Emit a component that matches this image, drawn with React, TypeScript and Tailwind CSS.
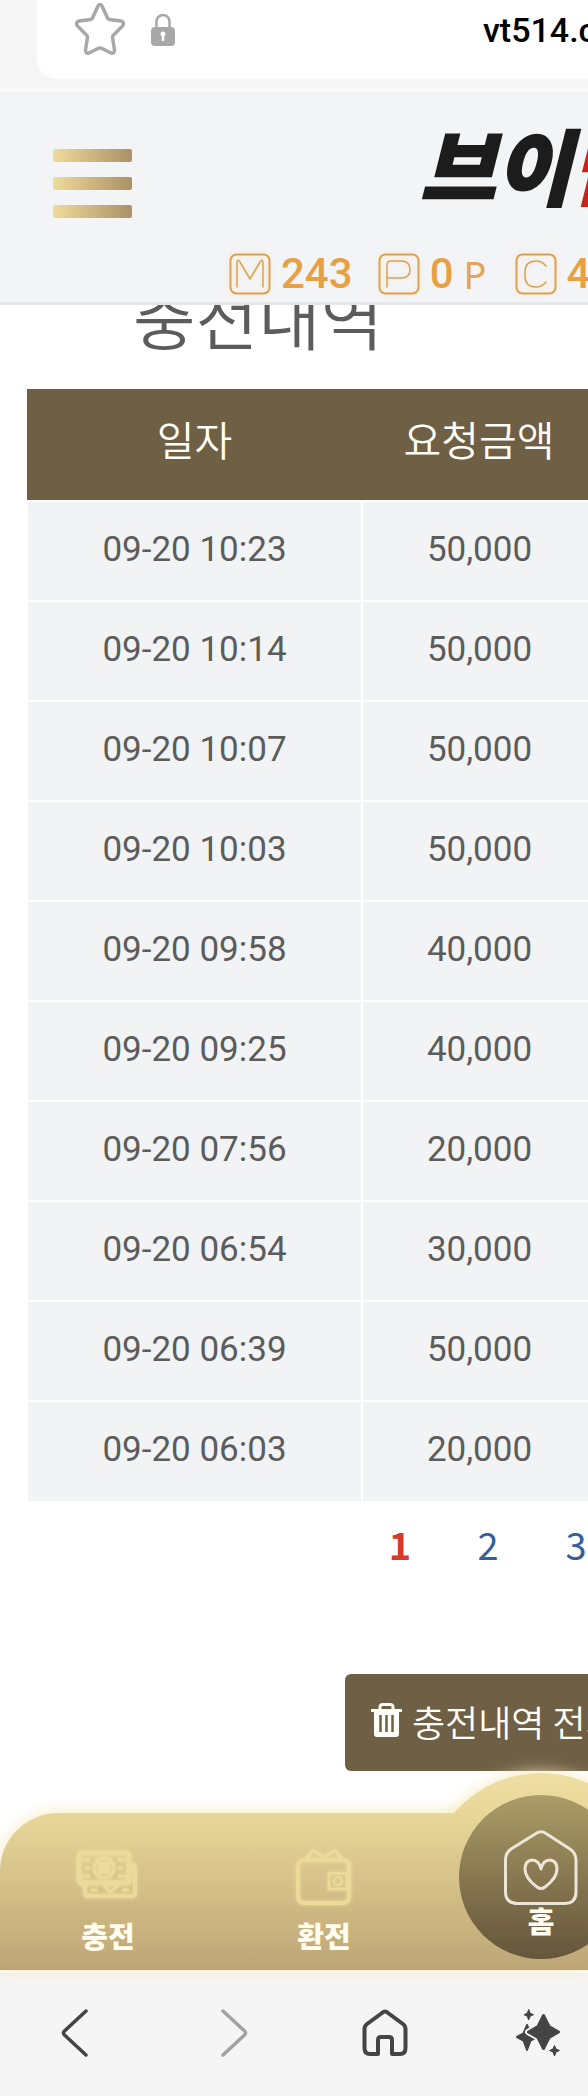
import React from "react";

const deposits = [
  { date: "09-20 10:23", amount: "50,000" },
  { date: "09-20 10:14", amount: "50,000" },
  { date: "09-20 10:07", amount: "50,000" },
  { date: "09-20 10:03", amount: "50,000" },
  { date: "09-20 09:58", amount: "40,000" },
  { date: "09-20 09:25", amount: "40,000" },
  { date: "09-20 07:56", amount: "20,000" },
  { date: "09-20 06:54", amount: "30,000" },
  { date: "09-20 06:39", amount: "50,000" },
  { date: "09-20 06:03", amount: "20,000" },
];

function BrowserTop() {
  return (
    <div className="bg-[#f6f6f6] border-b-3 border-[#fbfbfb] pl-[37px] pb-[10px]">
      <div className="h-[79px] bg-white rounded-bl-[20px] flex items-center pl-[38px] pb-[20px]">
        <button aria-label="즐겨찾기" className="shrink-0">
          <svg width="50" height="55" viewBox="0 0 50 55" fill="none" stroke="#a8a8aa" strokeWidth="3.5" strokeLinejoin="round">
            <path d="M23 4Q25 1 27 4L32.500 16Q33 17 34.500 17.500L46 19Q50 20.500 47.500 24L38.500 33Q37.500 34 37.500 35.500L39.500 48Q39.500 52 36 51L27 46.500Q25 45.500 23 46.500L14 51Q10.500 52 10.500 48L12.500 35.500Q12.500 34 11.500 33L2.500 24Q0 20.500 4 19L15.500 17.500Q17 17 17.500 16Z" />
          </svg>
        </button>
        <svg className="ml-[26px] shrink-0" width="24" height="34" viewBox="0 0 24 34">
          <path d="M5.500 14V8.500a6.500 6.500 0 0 1 13 0V14" fill="none" stroke="#a8a8aa" strokeWidth="2.500" />
          <rect y="14" width="24" height="19" rx="4" fill="#a8a8aa" />
          <circle cx="12" cy="21" r="2.500" fill="#fff" />
          <path d="M12 21v6" stroke="#fff" strokeWidth="2.500" strokeLinecap="round" />
        </svg>
        <span className="ml-[308px] font-['Roboto',sans-serif] font-medium text-[34px] leading-[40px] text-black whitespace-nowrap">vt514.com</span>
      </div>
    </div>
  );
}

function BalanceIcon({ d }: { d: string }) {
  return (
    <svg width="44" height="44" viewBox="0 0 44 44" fill="none" stroke="#d9a155" className="shrink-0 drop-shadow-[0_0_2px_#ffe9c4]">
      <rect x="2.500" y="2.500" width="39" height="39" rx="6" strokeWidth="2" />
      <path d={d} strokeWidth="1.500" strokeLinecap="round" strokeLinejoin="round" />
    </svg>
  );
}

const amountClass = "font-['Roboto',sans-serif] font-medium text-[42px] leading-[44px] text-[#e8a045]";

function SiteHeader() {
  return (
    <header className="relative z-10 h-[213px] bg-[#f2f4f6] border-b-3 border-[#e5e6e8] pt-[30px] overflow-hidden">
      <div className="flex items-start h-[88px] pl-[53px]">
        <button aria-label="메뉴" className="flex flex-col gap-[15px] w-[79px] shrink-0 mt-[27px]">
          <span className="block w-full h-[13px] rounded-xs bg-linear-to-r from-[#efdc9a] to-[#ab9166]" />
          <span className="block w-full h-[13px] rounded-xs bg-linear-to-r from-[#efdc9a] to-[#ab9166]" />
          <span className="block w-full h-[13px] rounded-xs bg-linear-to-r from-[#efdc9a] to-[#ab9166]" />
        </button>
        <a href="/" className="ml-[288px] shrink-0 font-['Noto_Sans_CJK_KR',sans-serif] font-black italic text-[82px] leading-[84px] text-[#1c1c1c] whitespace-nowrap [-webkit-text-stroke:2px]">
          브이<span className="text-[#c4261d]">탑</span>
        </a>
      </div>
      <div className="flex items-center pl-[228px] mt-[42px]">
        <BalanceIcon d="M9 35V11Q9 6 12 10L22 27L32 10Q35 6 35 11V35" />
        <span className={`${amountClass} ml-[9px]`}>243</span>
        <div className="ml-[24px] flex">
          <BalanceIcon d="M10 35V13Q10 9 14 9H24Q33 9 33 17.500Q33 26 24 26H10" />
        </div>
        <span className={`${amountClass} ml-[9px]`}>0</span>
        <span className="ml-[10px] font-['Noto_Sans',sans-serif] text-[38px] leading-[44px] text-[#e2a459]">P</span>
        <div className="ml-[27px] flex">
          <BalanceIcon d="M32 14Q28 9 22 9Q11 9 11 20V24Q11 35 22 35Q28 35 32 30" />
        </div>
        <span className={`${amountClass} ml-[9px] whitespace-nowrap`}>4</span>
      </div>
    </header>
  );
}

function DepositTable() {
  return (
    <table className="ml-[26px] w-[570px] table-fixed border-collapse">
      <thead>
        <tr className="h-[112px] bg-[#6e5f45] text-[#fffef8] text-[41px] leading-[48px]">
          <th className="w-[335px] font-[350] pb-[14px]">일자</th>
          <th className="font-[350] pb-[14px]">요청금액</th>
        </tr>
      </thead>
      <tbody className="font-['Roboto',sans-serif] text-[35px] leading-[40px] text-[#5c5c5c]">
        {deposits.map((row) => (
          <tr key={row.date} className="h-[100px] bg-[#f2f3f5] border-t-2 border-white">
            <td className="text-center border-x-2 border-white pb-[3px]">{row.date}</td>
            <td className="text-center pb-[3px]">{row.amount}</td>
          </tr>
        ))}
      </tbody>
    </table>
  );
}

function MoneyIcon() {
  return (
    <svg width="64" height="50" viewBox="0 0 64 50" fill="none" stroke="#ecda9b" strokeWidth="3" className="drop-shadow-[0_0_2px_#ecda9b]">
      <path d="M9 34V43Q9 46 12 46H56Q59 46 59 43V18Q59 15 56 15H53" strokeWidth="4" />
      <rect x="3" y="3" width="50" height="30" rx="3" strokeWidth="5" />
      <circle cx="28" cy="18" r="10" />
      <path d="M22 12L34 24M34 12L22 24M28 13L23 18L28 23L33 18ZM6 10H14M6 26H14M42 10H50M42 26H50M9 18H14M42 18H47M15 40H22M46 40H53M53 24V34M28 36L34 42L42 36" />
    </svg>
  );
}

function WalletIcon() {
  return (
    <svg width="60" height="60" viewBox="0 0 60 60" fill="none" stroke="#ecda9b" strokeWidth="3" className="drop-shadow-[0_0_2px_#ecda9b]">
      <rect x="4" y="13" width="51" height="43" rx="6" strokeWidth="4" />
      <path d="M13 12L17 5Q19 3 22 5L30 11L38 5Q41 3 43 5L47 12" />
      <rect x="35" y="26" width="18" height="16" strokeWidth="2.500" />
      <circle cx="44" cy="34" r="4" strokeWidth="2" />
    </svg>
  );
}

function HomeHeartIcon() {
  return (
    <svg width="76" height="76" viewBox="0 0 76 76" fill="none" stroke="#ece6d8" strokeWidth="3" strokeLinejoin="round">
      <path d="M33 3.500Q38 0 43 3.500L67 19Q73 23 73 30V62Q73 73.500 61 73.500H15Q2.500 73.500 2.500 62V30Q2.500 23 8 19Z" />
      <path d="M38 39Q36 30 29 30Q22 31 22 39Q22 48 34 57Q38 60 42 57Q54 48 54 39Q54 31 47 30Q40 30 38 39Z" />
    </svg>
  );
}

function SiteNav() {
  return (
    <nav className="relative z-10 flex h-[157px] rounded-tl-[58px] bg-linear-to-b from-[#e9d799] to-[#bda676] border-b border-[#b4a07a] shadow-[0_0_16px_#f5e8bd] font-black text-[29px] leading-[36px] text-[#fffdf0]">
      <a href="/deposit" className="w-[216px] shrink-0 flex flex-col items-center pt-[37px]">
        <MoneyIcon />
        <span className="mt-[17px]">충전</span>
      </a>
      <a href="/withdraw" className="w-[216px] shrink-0 flex flex-col items-center pt-[34px]">
        <WalletIcon />
        <span className="mt-[10px]">환전</span>
      </a>
      <div className="w-[218px] shrink-0 relative">
        {/* Raised disc behind the home button, only its top shows above the bar */}
        <div className="absolute left-[-26px] -top-[60px] w-[270px] h-[60px] px-[20px] pt-[20px] overflow-hidden">
          <div className="w-[230px] h-[230px] rounded-full bg-linear-to-b from-[#efdea2] from-0% to-[#e9d799] to-18% shadow-[0_0_16px_#f5e8bd]" />
        </div>
        <a href="/" className="absolute left-[27px] -top-[18px] w-[164px] h-[164px] rounded-full bg-linear-to-b from-[#ab9d67] to-[#65553b] flex flex-col items-center pt-[35px]">
          <HomeHeartIcon />
          <span className="-mt-1">홈</span>
        </a>
      </div>
    </nav>
  );
}

function BrowserBottom() {
  return (
    <div className="h-[126px] border-t-3 border-[#fdfdfd] bg-[#f5f5f5] flex items-center pb-1 text-[#444]">
      <button aria-label="뒤로" className="w-[150px] shrink-0 flex justify-center">
        <svg width="28" height="50" viewBox="0 0 28 50" fill="none" stroke="#444" strokeWidth="3.500" strokeLinecap="round">
          <path d="M25 3L3.500 23Q1.500 25 3.500 27L25 47" />
        </svg>
      </button>
      <button aria-label="앞으로" className="w-[168px] shrink-0 flex justify-center">
        <svg width="28" height="50" viewBox="0 0 28 50" fill="none" stroke="#a2a2a2" strokeWidth="3.500" strokeLinecap="round">
          <path d="M3 3L24.500 23Q26.500 25 24.500 27L3 47" />
        </svg>
      </button>
      <button aria-label="홈" className="w-[134px] shrink-0 flex justify-center">
        <svg width="46" height="48" viewBox="0 0 46 48" fill="none" stroke="#444" strokeWidth="4" strokeLinejoin="round">
          <path d="M20 4Q23 1 26 4L41 15Q43.500 17 43.500 20V39Q43.500 45 38 45H30V31Q30 28 27 28H19Q16 28 16 31V45H8Q2.500 45 2.500 39V20Q2.500 17 5 15Z" />
        </svg>
      </button>
      <button aria-label="AI" className="w-[174px] shrink-0 flex justify-center">
        <svg width="46" height="50" viewBox="0 0 46 50" fill="#444" stroke="#444" strokeLinejoin="round">
          <path d="M11 17L14.500 25.500L21 29L14.500 32.500L11 42L7.500 32.500L1 29L7.500 25.500Z" strokeWidth="2" />
          <path d="M27.500 7L33 18.500L43 24L33 29.500L27.500 41L22 29.500L12 24L22 18.500Z" stroke="#f5f5f5" strokeWidth="6" />
          <path d="M27.500 7.500L33 18.500L42.500 24L33 29.500L27.500 40.500L22 29.500L12.500 24L22 18.500Z" strokeWidth="3" />
          <path d="M12.700 1.500L14.200 5.200L17.500 6.700L14.200 8.200L12.700 12L11.200 8.200L8 6.700L11.200 5.200Z" strokeWidth="1" />
          <path d="M38.500 37.500L40 41L43.500 42.500L40 44L38.500 48L37 44L33.500 42.500L37 41Z" strokeWidth="1" />
        </svg>
      </button>
    </div>
  );
}

export default function App() {
  return (
    <div className="w-full overflow-hidden bg-white font-['Noto_Sans_CJK_KR',sans-serif]">
      <BrowserTop />
      <SiteHeader />
      <main>
        <h1 className="pl-[133px] -mt-[29px] h-[113px] text-[68px] leading-[80px] font-[350] text-[#5c5c5c] whitespace-nowrap">충전내역</h1>
        <DepositTable />
        <div className="flex pl-[356px] pt-[17px] text-[38px] leading-[52px] text-[#345f9c]">
          <a href="#1" className="w-[88px] shrink-0 text-center font-bold text-[#d8392b]">1</a>
          <a href="#2" className="w-[88px] shrink-0 text-center">2</a>
          <a href="#3" className="w-[88px] shrink-0 text-center">3</a>
        </div>
        <button className="ml-[345px] mt-[104px] h-[97px] w-[390px] rounded-md bg-[#6e5f45] text-[#fffef8] flex items-center pl-[26px] pb-[4px] text-[36px] leading-[48px] font-[350] whitespace-nowrap">
          <svg className="mr-[10px] shrink-0" width="31" height="35" viewBox="0 0 31 35">
            <path d="M9 6V4Q9 1.500 12 1.500H19Q22 1.500 22 4V6" fill="none" stroke="#fffef8" strokeWidth="3" />
            <path d="M0 6H31V9H28V31Q28 34 25 34H6Q3 34 3 31V9H0Z" fill="#fffef8" />
            <path d="M9.500 12V29M15.500 12V29M21.500 12V29" stroke="#6e5f45" strokeWidth="2.500" />
          </svg>
          충전내역 전체삭제
        </button>
      </main>
      <div className="h-[42px]" />
      <SiteNav />
      <BrowserBottom />
    </div>
  );
}
